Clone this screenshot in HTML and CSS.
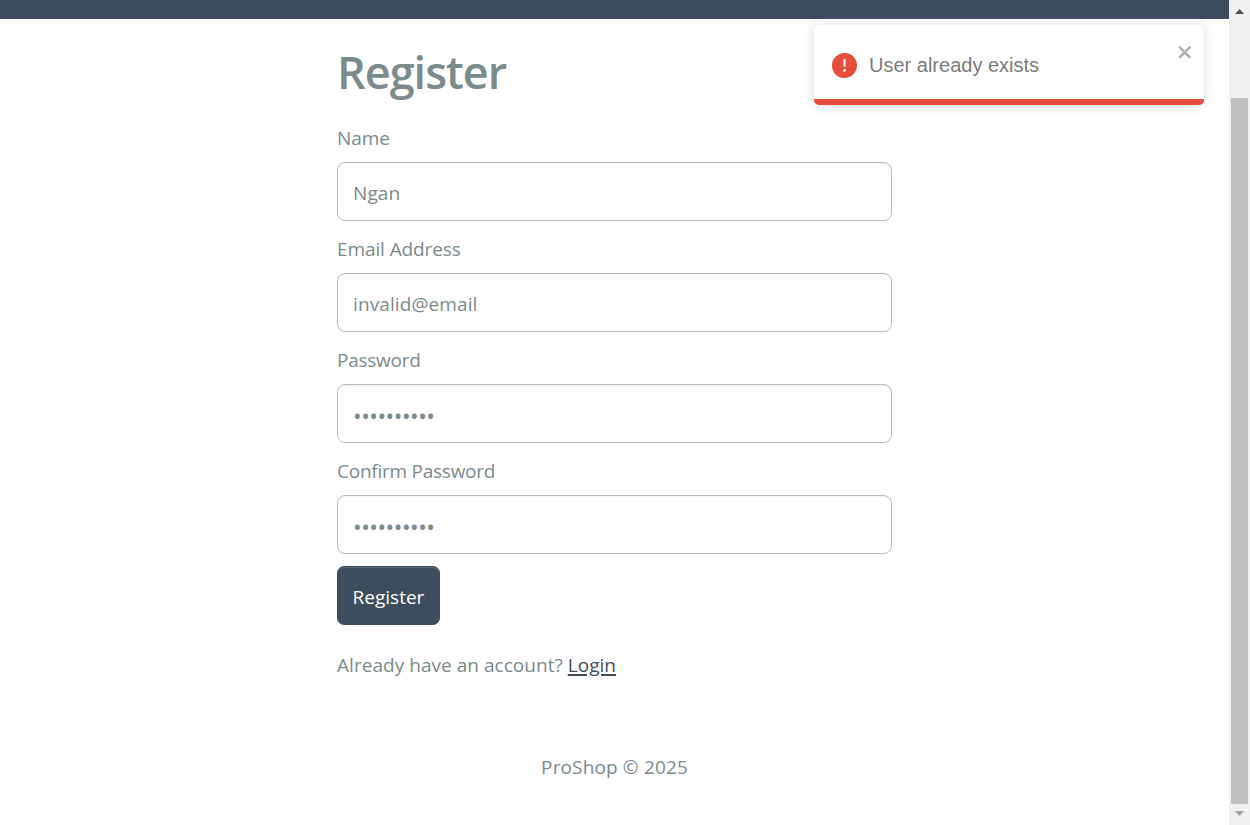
FILE: index.html
```
<!DOCTYPE html>
<html lang="en">
<head>
<meta charset="utf-8">
<title>Register</title>
<link rel="stylesheet" href="styles.css">
</head>
<body>
<div class="window">
  <div class="page">
    <header class="navbar"></header>
    <main class="container">
      <h1 class="title">Register</h1>
      <form class="form">
        <div class="field"><label class="label" for="name">Name</label><input class="control" id="name" type="text" value="Ngan"></div>
        <div class="field"><label class="label" for="email">Email Address</label><input class="control" id="email" type="text" value="invalid@email"></div>
        <div class="field"><label class="label label-tight" for="password">Password</label><input class="control secret" id="password" type="password" value="abcdefghij"></div>
        <div class="field"><label class="label label-tight" for="confirm">Confirm Password</label><input class="control secret" id="confirm" type="password" value="abcdefghij"></div>
        <button class="button" type="button">Register</button>
      </form>
      <p class="switch">Already have an account? <a class="link" href="#">Login</a></p>
    </main>
    <footer class="footer">ProShop © 2025</footer>
  </div>
  <div class="scrollbar">
    <svg class="arrow" width="21" height="18" viewBox="0 0 21 18"><path d="M6 14L10.500 9L15 14Z" fill="#505050"/></svg>
    <div class="thumb"></div>
    <svg class="arrow" width="21" height="21" viewBox="0 0 21 21"><path d="M6 7L10.500 12L15 7Z" fill="#a3a3a3"/></svg>
  </div>
  <div class="toast" role="alert">
    <div class="toast-body">
      <svg class="toast-icon" viewBox="0 0 24 24" fill="#e74c3c"><path d="M11.983 0a12.206 12.206 0 00-8.510 3.653A11.800 11.800 0 000 12.207 11.779 11.779 0 0011.800 24h.214A12.111 12.111 0 0024 11.791 11.766 11.766 0 0011.983 0zM10.500 16.542a1.476 1.476 0 011.449-1.530h.027a1.527 1.527 0 011.523 1.470 1.475 1.475 0 01-1.449 1.530h-.027a1.529 1.529 0 01-1.523-1.470zM11 12.500v-6a1 1 0 012 0v6a1 1 0 11-2 0z"/></svg>
      <span class="toast-text">User already exists</span>
    </div>
    <svg class="close" viewBox="0 0 14 16" fill="#b3b3b3"><path fill-rule="evenodd" d="M7.710 8.230l3.750 3.750-1.480 1.480-3.750-3.750-3.750 3.750L1 11.980l3.750-3.750L1 4.480 2.480 3l3.750 3.750L9.980 3l1.480 1.480-3.750 3.750z"/></svg>
    <div class="progress"></div>
  </div>
</div>
</body>
</html>
```
FILE: styles.css
```
* { box-sizing: border-box; }
body {
  margin: 0;
  background: #fff;
  color: #7b8a8b;
  font-family: "Open Sans", "Noto Sans", sans-serif;
  font-size: 19px;
  line-height: 30px;
  overflow: hidden;
}
.window { display: flex; position: relative; height: 825px; }
.page { flex: 1; display: flex; flex-direction: column; }
.navbar { height: 19px; background: #3e4d5d; }
.container { width: 555px; margin: 0 auto; padding-top: 26px; }
.title {
  margin: 0 0 20px;
  font-size: 45px;
  font-weight: 600;
  line-height: 54px;
  letter-spacing: -1px;
}
.form { display: flex; flex-direction: column; align-items: flex-start; }
.field { display: flex; flex-direction: column; width: 100%; height: 101px; margin-bottom: 10px; padding-top: 4px; }
.label { flex: none; height: 39px; letter-spacing: -.1px; }
.label-tight { letter-spacing: -.25px; }
.control {
  flex: none;
  width: 100%;
  height: 59px;
  margin: 0;
  padding: 3px 15px 0;
  border: 1px solid #b2bfbf;
  border-radius: 8px;
  outline: 0;
  background: #fff;
  box-shadow: inset 0 1px 2px rgba(0, 0, 0, .05);
  color: inherit;
  font: inherit;
  letter-spacing: .1px;
}
.secret { padding-top: 4px; font-size: 23px; letter-spacing: -.5px; }
.button {
  width: 103px;
  height: 59px;
  margin-top: 3px;
  padding: 3px 0 0;
  border: 1px solid #3e4d5d;
  border-radius: 7px;
  background: #3e4d5d;
  box-shadow: inset 0 1px 0 rgba(255, 255, 255, .15);
  color: #fff;
  font: inherit;
}
.switch { margin: 25px 0 0; white-space: nowrap; letter-spacing: .04px; }
.link { color: #3e4d5d; text-decoration-thickness: 2px; text-underline-offset: 2px; }
.footer { margin-top: 72px; text-align: center; letter-spacing: .14px; }
.scrollbar { width: 21px; background: #f0f0f0; display: flex; flex-direction: column; align-items: center; }
.arrow { display: block; flex: none; }
.thumb { width: 17px; flex: 1; margin-top: 80px; background: #c1c1c1; }
.toast {
  position: absolute;
  left: 814px;
  top: 25px;
  width: 390px;
  height: 80px;
  border-radius: 5px;
  overflow: hidden;
  background: #fff;
  box-shadow: 0 1px 12px rgba(0, 0, 0, .15);
}
.toast-body { display: flex; align-items: center; height: 80px; padding-left: 18px; gap: 12px; }
.toast-icon { width: 25px; height: 25px; }
.toast-text { color: #7b7b7b; font: 20px/30px "Liberation Sans", sans-serif; }
.close { position: absolute; left: 363px; top: 17px; width: 17.500px; height: 20px; }
.progress { position: absolute; left: 0; right: 0; bottom: 0; height: 6px; background: #e74c3c; }
```
